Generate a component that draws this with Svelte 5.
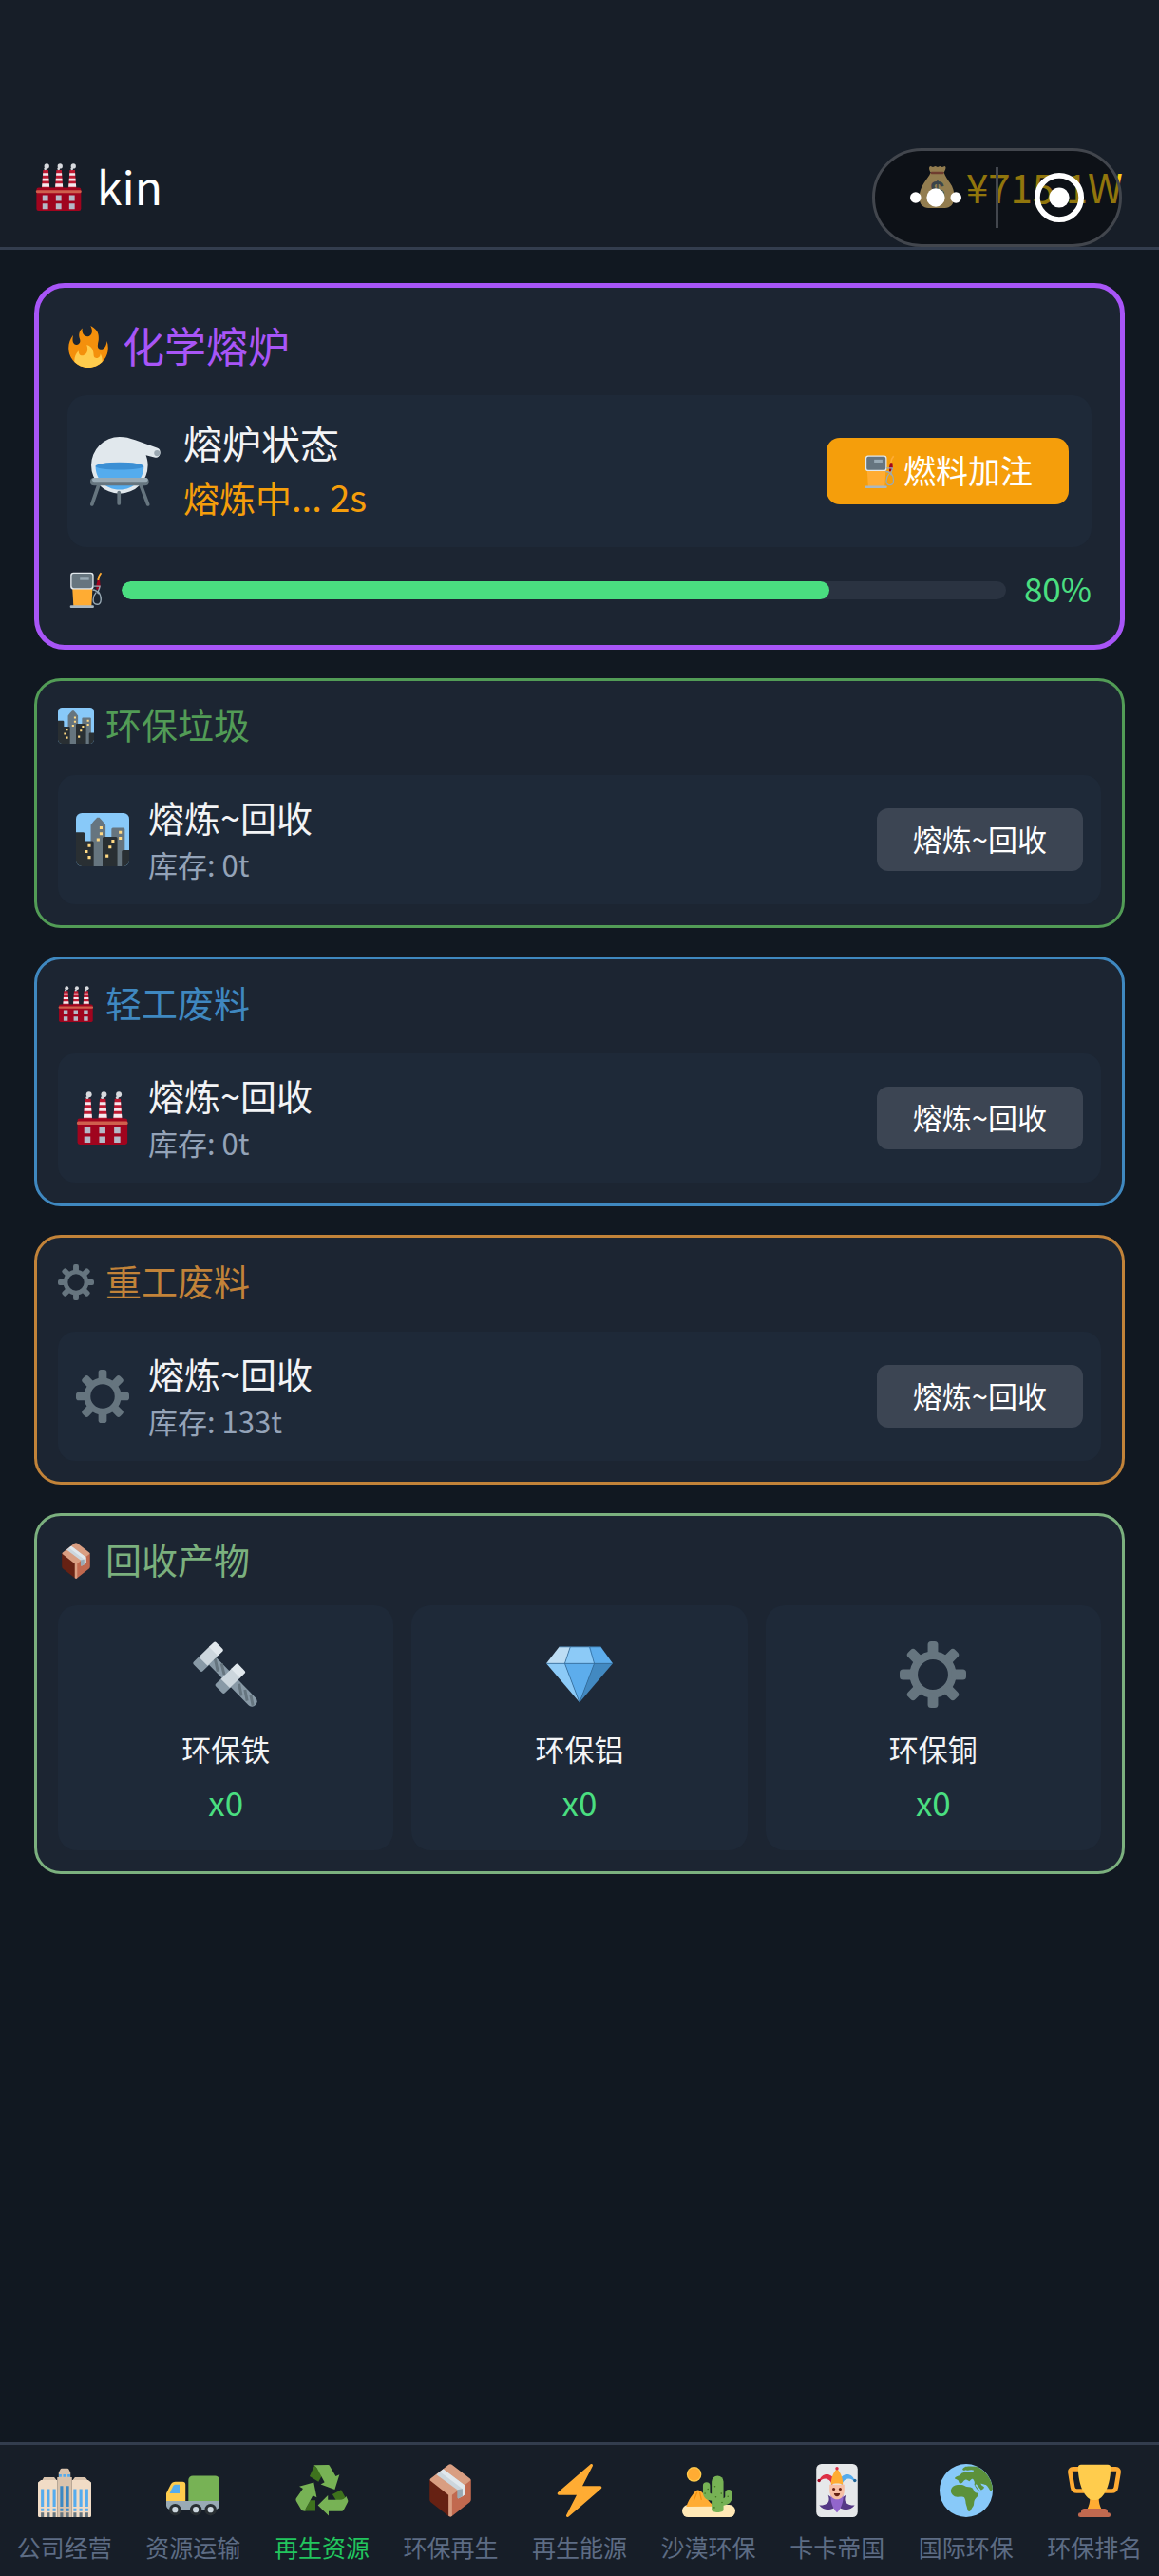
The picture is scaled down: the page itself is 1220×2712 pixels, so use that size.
<script>
  const icons = {
    factory: `
      <path fill="#BE1931" d="M6 5h4l1 15H5zM16.100 5h4l1 15h-6zM26.200 5h4l1 15h-6z"/>
      <path fill="#F5E9EE" d="M5.900 7.300h4.200l.1 1.800H5.800zM16 7.300h4.200l.1 1.800h-4.400zM26.100 7.300h4.200l.1 1.800H26zM5.600 11.400h4.800l.1 1.900h-5zM15.700 11.400h4.800l.1 1.900h-5zM25.800 11.400h4.800l.1 1.900h-5zM5.300 15.300h5.400l.2 2.500H5.100zM15.400 15.300h5.400l.2 2.500h-5.800zM25.500 15.300h5.400l.2 2.500h-5.800z"/>
      <g fill="#D8DADE"><circle cx="8.800" cy="2.100" r="1.900"/><circle cx="7.700" cy="4.200" r="1"/><circle cx="18.900" cy="2.100" r="1.900"/><circle cx="17.800" cy="4.200" r="1"/><circle cx="29" cy="2.100" r="1.900"/><circle cx="27.900" cy="4.200" r="1"/></g>
      <rect x="1" y="18.400" width="33.800" height="17.600" rx="1.600" fill="#A0041E"/>
      <rect x=".6" y="20.300" width="34.500" height="2.200" rx="1" fill="#CF5F4D"/>
      <path fill="#B4B9C7" d="M5.600 24.200h4.200v4.200H5.600zM15.700 24.200h4.200v4.200h-4.200zM25.800 24.200H30v4.200h-4.200zM5.600 30.500h4.200v4.200H5.600zM15.700 30.500h4.200v4.200h-4.200zM25.800 30.500H30v4.200h-4.200z"/>`,
    fire: `
      <path fill="#F4900C" d="M35 19c0-2.062-.367-4.039-1.040-5.868-.46 5.389-3.333 8.157-6.335 6.868-2.812-1.208-.917-5.917-.777-8.164.236-3.809-.012-8.169-6.931-11.794 2.875 5.500.333 8.917-2.333 9.125-2.958.231-5.667-2.542-4.667-7.042-3.238 2.386-3.332 6.402-2.333 9 1.042 2.708-.042 4.958-2.583 5.208-2.840.28-4.418-3.041-2.963-8.333C2.520 10.965 1 14.805 1 19c0 9.389 7.611 17 17 17s17-7.611 17-17z"/>
      <path fill="#FFCC4D" d="M28.394 23.999c.148 3.084-2.561 4.293-4.019 3.709-2.106-.843-1.541-2.291-2.083-5.291s-2.625-5.083-5.708-6c2.250 6.333-1.247 8.667-3.080 9.084-1.872.426-3.753-.001-3.968-4.007C7.352 23.668 6 26.676 6 30c0 .368.023.73.055 1.090C9.125 34.124 13.342 36 18 36s8.875-1.876 11.945-4.910c.032-.36.055-.722.055-1.090 0-2.187-.584-4.236-1.606-6.001z"/>`,
    alembic: `
      <path fill="#E1E8ED" d="M15 .5c3 0 5 .6 8 1.600l11.500 4.100c2.300.9 1.500 5.300-1.200 4.900l-4.800-1.200c.6 1.600 1 3.300 1 5.100A14.500 14.500 0 1 1 15 .5z"/>
      <circle cx="34.200" cy="8.800" r="1.500" fill="#9BA8B2"/>
      <path fill="#55ACEE" d="M2.700 15.400h24.700c0 7-5.500 12.100-12.400 12.100S2.700 22.400 2.700 15.400z"/>
      <ellipse cx="15" cy="15.400" rx="12.300" ry="1.900" fill="#3B8FD4"/>
      <path stroke="#66757F" stroke-width="1.800" stroke-linecap="round" d="M4.500 24.500.9 35M25.600 24.500 29.500 35M14.700 29v5.500"/>
      <rect y="21.400" width="30" height="4" rx="2" fill="#66757F"/>
      <rect x="1" y="21.400" width="28.500" height="2.100" rx="1" fill="#99AAB5"/>`,
    fuel: `
      <path fill="#FFAC33" d="M5 17h20l-1 17H6z"/>
      <rect x="3" y=".6" width="23.200" height="17" rx="3" fill="#E1E8ED"/>
      <rect x="4.300" y="1.900" width="20.600" height="14.400" rx="2" fill="#66757F"/>
      <rect x="12.500" y="5" width="9" height="3.200" fill="#99AAB5"/>
      <rect x="2.600" y="33.300" width="23.800" height="2.700" rx="1" fill="#AAB8C2"/>
      <path fill="none" stroke="#FFAC33" stroke-width="1.700" d="M33.600 1.200c-2 2.300-3 4-3 7.500"/>
      <path fill="#A0041E" d="M30 8.500h2.300l.5 6-1.300 3.200h-2.700v-4.500z"/>
      <path fill="none" stroke="#99AAB5" stroke-width="1.300" d="M25.800 14.300h6.500c-.2 2-1 3-1.700 5.200 3.800 4.500 4 13-1 13-5.600 0-4.500-8-1-12M25 18c3 0 5 1.500 6 4"/>`,
    city: `
      <rect width="36" height="36" rx="4" fill="#88C9F9"/>
      <path fill="#66757F" d="M10 36V8l2-2.500L14.300 3h1.500L18 5.500 20 8v28zM24 36V11a1 1 0 0 1 1-1h7a1 1 0 0 1 1 1v25z"/>
      <path fill="#292F33" d="M0 13h5a1 1 0 0 1 1 1v5h5a1 1 0 0 1 1 1v16H4a4 4 0 0 1-4-4zM18 36V17a1 1 0 0 1 1-1h8a1 1 0 0 1 1 1v19zM31 36V26a1 1 0 0 1 1-1h4v7a4 4 0 0 1-4 4z"/>
      <path fill="#FFD983" d="M16 9h2v2h-2zM16 13h2v2h-2zM14 17h2v2h-2zM29 12h2v2h-2zM29 16h2v2h-2zM24 18h2v2h-2zM22 22h2v2h-2zM20 28h2v2h-2zM8 21h2v2H8zM6 25h2v2H6zM8 29h2v2H8z"/>`,
    gear: `
      <circle cx="18" cy="18" r="10.400" fill="none" stroke="#66757F" stroke-width="4.400"/>
      <g fill="#66757F">${[0, 45, 90, 135, 180, 225, 270, 315]
        .map((a) => `<rect x="15.200" width="5.600" height="8" rx="1.800" transform="rotate(${a} 18 18)"/>`)
        .join("")}</g>`,
    box: `
      <path fill="#662113" d="M4 10.500 18 21v14.800c-.6 0-1-.3-1.500-.7L5 26c-.7-.6-1-1.200-1-2z"/>
      <path fill="#C1694F" d="M32 10.500 18 21v14.800c.6 0 1-.3 1.500-.7L31 26c.7-.6 1-1.200 1-2z"/>
      <path fill="#D99E82" d="M5 9.700 16.500.8c1-.8 2-.8 3 0L31 9.700c1 .8 1 1.300 0 2.100L19.200 21v14.200c-.7.700-1.700.700-2.400 0V21L5 11.800c-1-.8-1-1.300 0-2.100z"/>
      <path fill="#CCD6DD" d="M8.600 7.200 13.300 3.500 28 14.700v5.800l-1.500 1.300-3.300 1.700v-5.600z"/>
      <path fill="#E1E8ED" d="M11 5.300l2.300-1.800L28 14.700v5.800l-1.700 1.200v-4.900z"/>
      <path fill="#99AAB5" d="M22.700 17.500l3.600-.7v4.900l-2.300 1.500c-.8.300-1.300 0-1.300-.7z"/>`,
    bolt: `
      <path d="M9 9 32 32.500" stroke="#8899A6" stroke-width="5.600" stroke-linecap="round"/>
      <path d="M12 9.300l1.500 7M15.500 12l1.500 6M25 23l1.300 6.500M28.200 26.200l1.200 6M31.300 29l1.200 5.800" stroke="#66757F" stroke-width="1.500"/>
      <path fill="#8899A6" d="M4 7.600.5 11.100c-.5.500-.5 1 0 1.500l3.400 3.500c.5.500 1 .5 1.500 0L9 12.600zM16 19.500l-3.500 3.400c-.5.500-.5 1 0 1.500l3.400 3.500c.5.500 1 .5 1.500 0l3.600-3.500z"/>
      <path fill="#CCD6DD" d="M9 2.800 3.200 8.500 8 13.300l5.700-5.700zM21 14.700l-5.800 5.700 4.800 4.800 5.800-5.700z"/>
      <path fill="#E1E8ED" d="M8.700 3 11.200.6c.5-.5 1-.5 1.500 0L16 4c.5.500.5 1 0 1.500l-2.500 2.400zM20.700 14.900l2.500-2.400c.5-.5 1-.5 1.500 0l3.300 3.400c.5.500.5 1 0 1.500l-2.500 2.400z"/>`,
    gem: `
      <path fill="#8CCAF7" d="M13 3h10.500L26 12H10z"/>
      <path fill="#BDDDF4" d="M7 3h6l-3 9H0z"/>
      <path fill="#5DADEC" d="M23 3h6.500L36 12H26z"/>
      <path fill="#8CCAF7" d="M0 12h10l8 21z"/>
      <path fill="#5DADEC" d="M10 12h16l-8 21z"/>
      <path fill="#4289C1" d="M26 12h10L18 33z"/>
      <path fill="none" stroke="#356f9e" stroke-width=".4" d="M7 3h22.500M0 12h36M13 3l-3 9 8 21 8-21-2.500-9"/>`,
    office: `
      <path fill="#D9C3AD" d="M2.500 11.500 4 9h7l2 2.500zM23 11.500 25 9h7l2 2.500zM14 9V6l1.200-2.500c.2-.3.5-.5.8-.5h4c.3 0 .6.200.8.500L22 6v3z"/>
      <path fill="#F1DCC6" d="M0 12.500 2 11h11v25H1a1 1 0 0 1-1-1zM36 12.500 34 11H23v25h12a1 1 0 0 0 1-1z"/>
      <path fill="#D9C3AD" d="M13 9h10v27H13z"/>
      <path fill="#55ACEE" d="M14.200 7h1.800v1.800h-1.800zM17 7h2v1.800h-2zM20 7h1.800v1.800H20zM2 17h2v12H2zM6 17h2v12H6zM10 17h2v12h-2zM24 17h2v12h-2zM28 17h2v12h-2zM32 17h2v12h-2zM2 30h2v2H2zM6 30h2v2H6zM10 30h2v2h-2zM24 30h2v2h-2zM28 30h2v2h-2zM32 30h2v2h-2z"/>
      <path fill="#3B88C3" d="M15 15h2v14h-2zM19 15h2v14h-2zM15 30h2v2h-2zM19 30h2v2h-2z"/>
      <path fill="#66757F" d="M2 33h2v3H2zM6 33h2v3H6zM10 33h2v3h-2zM15 33h2v3h-2zM19 33h2v3h-2zM24 33h2v3h-2zM28 33h2v3h-2zM32 33h2v3h-2z"/>`,
    truck: `
      <path fill="#99AAB5" d="M0 25h36v3a3 3 0 0 1-3 3H3a3 3 0 0 1-3-3z"/>
      <path fill="#77B255" d="M15 11a3 3 0 0 1 3-3h15a3 3 0 0 1 3 3v14H15z"/>
      <path fill="#FFCC4D" d="M0 25v-5l3-6c.7-1.400 1.700-2 3.200-2H11a2 2 0 0 1 2 2v11z"/>
      <path fill="#55ACEE" d="M9 14H6.500c-1 0-1.500.3-2 1.200L2.300 20H9z"/>
      <g fill="#292F33"><circle cx="6" cy="31" r="4"/><circle cx="20" cy="31" r="4"/><circle cx="30" cy="31" r="4"/></g>
      <g fill="#CCD6DD"><circle cx="6" cy="31" r="2"/><circle cx="20" cy="31" r="2"/><circle cx="30" cy="31" r="2"/></g>`,
    recycle: `
      <path fill="#3E721D" d="M12.900 1 9.600 8.400l6 3.600 2.500-4.500zM13.500 24.600H10L6.200 31.800h7.300zM30.900 17.500 25 20.600l2.500 4 7-.6z"/>
      <path fill="#77B255" d="M12.400.8 21.700.7c.8 0 1.300.3 1.700 1l3.900 6.700 2.500-1.100-3.200 10.100-9.500-3.500 2.600-1.600L15.200 4c-.7-1.300-1.500-2.500-2.800-3.200z"/>
      <path fill="#77B255" d="M2.600 15.200l9.800-2.600 2 10.100-2.600-1.300-4.500 8.100c-.5 1-.8 1.800-.6 2.500-1.500 0-2.300-.2-3-1.400L.6 25.200c-.4-.7-.4-1.300 0-2l4.500-6.500z"/>
      <path fill="#77B255" d="M15.200 28 22 21.200v3h7.500c2.300 0 4-.5 4.800-2.400l1.100 2.400c.3.700.2 1.200-.1 1.800l-2.600 5c-.4.700-.9 1-1.700 1h-8.500v3z"/>`,
    zap: `
      <path fill="#FFAC33" d="M32.938 15.651C32.792 15.260 32.418 15 32 15H19.925L26.890 1.458c.219-.426.106-.947-.271-1.243C26.437.071 26.218 0 26 0c-.233 0-.466.082-.653.243L18 6.588 3.347 19.243c-.316.273-.43.714-.284 1.105S3.582 21 4 21h12.075L9.110 34.542c-.219.426-.106.947.271 1.243.182.144.401.215.619.215.233 0 .466-.082.653-.243L18 29.412l14.653-12.655c.317-.273.43-.714.285-1.106z"/>`,
    desert: `
      <circle cx="8.100" cy="7" r="5" fill="#FFCC4D"/><circle cx="8.100" cy="7" r="4.200" fill="#FFAC33"/>
      <rect y="27.700" width="36" height="8.300" rx="4.100" fill="#FFE8B6"/>
      <path fill="#FFAC33" d="M2.800 29c1-3.500 2.500-6 4.500-8.500 1.500-2 2.500-3 4-2.700 3.500 1 5 6 9 9.500v1.500z"/>
      <path d="M10 19.500l-2 5M12 19.500l1 4.500" stroke="#F4900C" stroke-width=".8" stroke-linecap="round"/>
      <path fill="#77B255" d="M20 12a4 4 0 0 1 8 0v19c0 2.300-8 2.300-8 0z"/>
      <path fill="none" stroke="#77B255" stroke-width="4.800" stroke-linecap="round" d="M16.500 14.700v4.500c0 2.800 2 3.500 5.500 3.500M31.500 19.700v2.500c0 2.600-2 3.500-5.500 3.700"/>
      <g fill="#3E721D"><circle cx="22.200" cy="15.300" r=".5"/><circle cx="26.500" cy="20" r=".5"/><circle cx="22.800" cy="22.300" r=".5"/><circle cx="27" cy="26" r=".5"/><circle cx="21.800" cy="29.500" r=".5"/><circle cx="17.500" cy="17" r=".5"/><circle cx="15.500" cy="20" r=".5"/><circle cx="31" cy="22" r=".5"/></g>`,
    joker: `
      <rect x="4" width="28" height="36" rx="3.500" fill="#E6E8EA"/>
      <path fill="#DD2E44" d="M14.500 15c0-3-1.700-4.500-4.200-5-2 0-3.300 1-4.500 2.300C6.500 8 10 6.500 12.500 7.300c2 .7 3 2 3.500 4z"/>
      <path fill="#55ACEE" d="M21.500 15c0-3 1.700-4.500 4.200-5 2 0 3.300 1 4.500 2.300C29.500 8 26 6.500 23.500 7.300c-2 .7-3 2-3.500 4z"/>
      <circle cx="5.900" cy="11.300" r="1.100" fill="#A0041E"/><circle cx="30.100" cy="11.300" r="1.100" fill="#226699"/>
      <path fill="#553986" d="M12 21c2 1 3 3 6 3s4-2 6-3c-1.500 4-.5 7 6 7-3 4-9 4-12 0-3 4-9 4-12 0 6.500 0 7.500-3 6-7z"/>
      <path fill="#9266CC" d="M14 20h8c1 5-1.500 11-4 13-2.500-2-5-8-4-13z"/>
      <path fill="#F7BFA5" d="M13 14h10v4c0 3.800-2.500 6-5 6s-5-2.200-5-6z"/>
      <path fill="#FFAC33" d="M14 14c0-5 1.500-8 4-11 2.500 3 4 6 4 11-2-1.200-6-1.200-8 0z"/>
      <circle cx="18" cy="3" r="1.100" fill="#DD2E44"/>
      <g fill="#662113"><circle cx="15.800" cy="17" r="1"/><circle cx="20.200" cy="17" r="1"/><path d="M16 20h4c0 1.300-.8 2-2 2s-2-.7-2-2z"/></g>`,
    globe: `
      <circle cx="18" cy="18" r="18" fill="#88C9F9"/>
      <path fill="#5C913B" d="M7.700 17.500c.6-2 2.300-3.200 4.500-3.300 2-.2 4-.2 5 .8 1 1 3.500.3 4.900 1.200 1 .8 1 2.600 2.300 3.300 1 .5 2 0 2 .9 0 1.600-2.200 2.600-2.800 4.400-.7 2 .2 3-1.500 4.800-.8 1-.8 2.500-2 2.500-1.400 0-1.200-2.300-2-4.200-.7-1.600-.2-3.200-1.200-4.900-.8-1.200-3-.6-5-.7-2.400 0-4.700-2.500-4.200-4.800z"/>
      <path fill="#5C913B" d="M15.500 3.500c1-1.500 3-2.200 5-1.900l4.500.2A18 18 0 0 1 35.900 17c-.6 1.400-1.200.8-1.500 1.100-.7-1-1.500-2.700-3-4-1.400-.3-2.200-.6-3.500-1 .3 1.700 1.500 1.600 2.300 2.500-.3 1.800-1.600 2.700-3 3.200-1.700-1-2.700-3-3.700-4.800.5-1.700 0-2.500-.8-3.700-.9-.7-1.800.8-2.500 1.500-1-.5-1.600-1.500-2.900-1-1.600.6-1.300 2.400-3.300 2.300-1.300-.3-.7-2-2-2.400-1.400-.7-1.700-.3-1.700-1.200 1.200-1.500 3-1.200 4-2.500.7-1.200 2.300-1.200 3.800-1.500-.2-1.400-2.500-.8-2.600-2z"/>
      <path d="M17 4.500c2 1 4-.5 6 .3M24.500 14l3.500 4.500 3-1.800" fill="none" stroke="#88C9F9" stroke-width="1.100"/>`,
    trophy: `
      <g fill="none" stroke="#FFAC33" stroke-width="3"><path d="M8.500 3.500H3.500c-1.500 0-2.100.8-1.900 2.300l1.700 10c.3 1.800 1.300 2.500 2.800 2.500H11"/><path d="M27.500 3.500h5c1.500 0 2.100.8 1.900 2.300l-1.700 10c-.3 1.800-1.300 2.500-2.800 2.500H25"/></g>
      <path fill="#FFAC33" d="M15 23h6c0 3 .5 5 2 8H13c1.500-3 2-5 2-8z"/>
      <path fill="#FFCC4D" d="M7 2.500A2 2 0 0 1 9 .5h18a2 2 0 0 1 2 2C29 13 25 24.500 18 24.500S7 13 7 2.500z"/>
      <path fill="#C1694F" d="M9 32.500a2.300 2.300 0 0 1 2.300-2.300h13.400a2.300 2.300 0 0 1 2.300 2.300v.5h.5a1.500 1.500 0 0 1 0 3h-19a1.500 1.500 0 0 1 0-3H9z"/>`,
    bag: `
      <path fill="#FDD888" d="M13 5h11c1.500 4 3 6 5.500 9.500S33.300 22 33 27c-.3 6-3.300 8.900-8 8.900H11c-4.700 0-8-2.900-8-8.900 0-5 1.500-8.500 4-12.500S11.500 9 13 5zM12.500 0c1 0 1.500.8 2.200.8S16 0 16.800 0s1.400.8 2 .8S20 0 20.800 0s1.300.8 2 .8S24.300 0 25 0c1.500 1 .5 3-.5 5h-12c-1-2-1.600-4 0-5z"/>
      <rect x="12.800" y="4.800" width="11.400" height="2" rx="1" fill="#BF6952"/>
      <text x="18.500" y="29" text-anchor="middle" font-family="Liberation Sans, sans-serif" font-size="22" font-weight="700" fill="#67757F">$</text>`,
  };

  const wastes = [
    { title: "环保垃圾", icon: "city", stock: 0, tone: "green" },
    { title: "轻工废料", icon: "factory", stock: 0, tone: "blue" },
    { title: "重工废料", icon: "gear", stock: 133, tone: "orange" },
  ];

  const products = [
    { name: "环保铁", icon: "bolt", count: 0 },
    { name: "环保铝", icon: "gem", count: 0 },
    { name: "环保铜", icon: "gear", count: 0 },
  ];

  const tabs = [
    { label: "公司经营", icon: "office" },
    { label: "资源运输", icon: "truck" },
    { label: "再生资源", icon: "recycle" },
    { label: "环保再生", icon: "box" },
    { label: "再生能源", icon: "zap" },
    { label: "沙漠环保", icon: "desert" },
    { label: "卡卡帝国", icon: "joker" },
    { label: "国际环保", icon: "globe" },
    { label: "环保排名", icon: "trophy" },
  ];

  let active = $state("再生资源");
  let fuel = $state(80);

  function refuel() {
    fuel = Math.min(100, fuel + 10);
  }
</script>

{#snippet icon(name)}
  <svg class="icon" viewBox="0 0 36 36" fill="none" aria-hidden="true">{@html icons[name]}</svg>
{/snippet}

<div class="page">
  <header>
    <div class="player">{@render icon("factory")}<span>kin</span></div>
    <div class="money">{@render icon("bag")}<span>¥715.1W</span></div>
    <div class="capsule">
      <button type="button" aria-label="更多">
        <svg viewBox="0 0 56 56" fill="#fff"><circle cx="6" cy="28" r="6" /><circle cx="28" cy="28" r="10" /><circle cx="50" cy="28" r="6" /></svg>
      </button>
      <i></i>
      <button type="button" aria-label="关闭">
        <svg viewBox="0 0 56 56" fill="#fff"><circle cx="28" cy="28" r="24" fill="none" stroke="#fff" stroke-width="6" /><circle cx="28" cy="28" r="11" /></svg>
      </button>
    </div>
  </header>

  <main>
    <section class="furnace">
      <h1>{@render icon("fire")}<span>化学熔炉</span></h1>
      <div class="status">
        {@render icon("alembic")}
        <div class="info">
          <p>熔炉状态</p>
          <p class="state">熔炼中... 2s</p>
        </div>
        <button type="button" class="refuel" onclick={refuel}>{@render icon("fuel")}<span>燃料加注</span></button>
      </div>
      <div class="fuel">
        {@render icon("fuel")}
        <div class="track" role="progressbar" aria-label="燃料" aria-valuenow={fuel} aria-valuemin="0" aria-valuemax="100">
          <div class="fill" style="width: {fuel}%"></div>
        </div>
        <span>{fuel}%</span>
      </div>
    </section>

    {#each wastes as w}
      <section class="card {w.tone}">
        <h2>{@render icon(w.icon)}<span>{w.title}</span></h2>
        <div class="row">
          {@render icon(w.icon)}
          <div class="info">
            <p>熔炼~回收</p>
            <p class="stock">库存: {w.stock}t</p>
          </div>
          <button type="button" class="smelt">熔炼~回收</button>
        </div>
      </section>
    {/each}

    <section class="card products">
      <h2>{@render icon("box")}<span>回收产物</span></h2>
      <ul>
        {#each products as p}
          <li>
            {@render icon(p.icon)}
            <span>{p.name}</span>
            <b>x{p.count}</b>
          </li>
        {/each}
      </ul>
    </section>
  </main>

  <nav>
    {#each tabs as tab}
      <button type="button" class:active={active === tab.label} onclick={() => (active = tab.label)}>
        {@render icon(tab.icon)}
        {tab.label}
      </button>
    {/each}
  </nav>
</div>

<style>
  :global(body) {
    margin: 0;
    background: #111821;
  }
  .page {
    min-height: 100vh;
    display: flex;
    flex-direction: column;
    color: #f3f4f6;
    font-family: "Noto Sans CJK SC", "Noto Sans", sans-serif;
  }
  h1,
  h2,
  p,
  ul {
    margin: 0;
    padding: 0;
    font-weight: 400;
  }
  button {
    font: inherit;
    color: inherit;
    background: none;
    border: 0;
    padding: 0;
    cursor: pointer;
  }
  .icon {
    display: block;
    flex-shrink: 0;
  }
  /* the CJK face sits low in its line box, lift it next to icons */
  header span,
  h1 span,
  h2 span,
  .refuel span,
  .fuel span,
  .info {
    padding-bottom: 4px;
  }

  header {
    position: relative;
    display: flex;
    align-items: center;
    justify-content: space-between;
    padding: 134px 38px 0 36px;
    background: #171e28;
    border-bottom: 3px solid #333d4e;
  }
  .player,
  .money {
    display: flex;
    align-items: center;
    height: 126px;
  }
  .player {
    gap: 14px;
    font-size: 48px;
    color: #fff;
  }
  .player .icon {
    width: 52px;
    height: 50px;
  }
  .money {
    gap: 9px;
    font-size: 42px;
    color: #facc15;
  }
  .money .icon {
    width: 44px;
    height: 44px;
  }
  .capsule {
    position: absolute;
    top: 156px;
    right: 39px;
    box-sizing: border-box;
    width: 263px;
    height: 104px;
    display: flex;
    align-items: center;
    border: 3px solid #42464d;
    border-radius: 52px;
    background: rgba(0, 0, 0, 0.42);
  }
  .capsule i {
    width: 3px;
    height: 64px;
    background: #42464d;
  }
  .capsule button {
    flex: 1;
    display: flex;
    justify-content: center;
  }
  .capsule svg {
    width: 54px;
    height: 54px;
  }

  main {
    flex: 1;
    display: flex;
    flex-direction: column;
    gap: 30px;
    padding: 35px 36px;
  }
  .furnace {
    padding: 30px;
    border: 5px solid #a855f7;
    border-radius: 32px;
    background: #1c2532;
  }
  h1 {
    display: flex;
    align-items: center;
    gap: 14px;
    margin-bottom: 19px;
    font-size: 44px;
    line-height: 60px;
    color: #a855f7;
  }
  h1 .icon {
    width: 44px;
    height: 44px;
  }
  .status {
    display: flex;
    align-items: center;
    gap: 24px;
    box-sizing: border-box;
    min-height: 160px;
    padding: 0 24px;
    border-radius: 20px;
    background: #1e2938;
  }
  .status > .icon {
    width: 74px;
    height: 74px;
  }
  .info {
    flex: 1;
  }
  .status p {
    font-size: 41px;
    line-height: 58px;
  }
  .status .state {
    font-size: 38px;
    color: #f59e0b;
  }
  .refuel {
    display: flex;
    align-items: center;
    gap: 8px;
    height: 70px;
    padding: 0 38px;
    border-radius: 14px;
    background: #f59e0b;
    color: #fff;
    font-size: 34px;
  }
  .refuel .icon {
    width: 35px;
    height: 35px;
  }
  .fuel {
    display: flex;
    align-items: center;
    gap: 19px;
    margin-top: 17px;
    font-size: 35px;
    line-height: 52px;
    color: #4ade80;
  }
  .fuel .icon {
    width: 38px;
    height: 38px;
  }
  .track {
    flex: 1;
    height: 19px;
    border-radius: 10px;
    background: #2a3341;
    overflow: hidden;
  }
  .fill {
    height: 100%;
    border-radius: 10px;
    background: #4ade80;
  }

  .card {
    padding: 22px;
    border: 3px solid var(--tone);
    border-radius: 28px;
    background: #1c2532;
  }
  .green {
    --tone: #529c56;
  }
  .blue {
    --tone: #3f88c0;
  }
  .orange {
    --tone: #c28339;
  }
  .products {
    --tone: #7bb07e;
  }
  h2 {
    display: flex;
    align-items: center;
    gap: 12px;
    margin-bottom: 27px;
    font-size: 38px;
    line-height: 46px;
    color: var(--tone);
  }
  h2 .icon {
    width: 38px;
    height: 38px;
  }
  .row {
    display: flex;
    align-items: center;
    gap: 20px;
    box-sizing: border-box;
    min-height: 136px;
    padding: 0 19px;
    border-radius: 18px;
    background: #1e2938;
  }
  .row .icon {
    width: 56px;
    height: 56px;
  }
  .row p {
    font-size: 38px;
    line-height: 56px;
  }
  .row .stock {
    font-size: 31px;
    line-height: 44px;
    color: #94a3b8;
  }
  .smelt {
    height: 66px;
    padding: 0 38px 4px;
    border-radius: 12px;
    background: #3c4553;
    color: #fff;
    font-size: 31px;
  }

  .products h2 {
    margin-bottom: 22px;
  }
  ul {
    display: grid;
    grid-template-columns: repeat(3, 1fr);
    gap: 19px;
    list-style: none;
  }
  li {
    display: flex;
    flex-direction: column;
    align-items: center;
    padding: 38px 0 21px;
    border-radius: 20px;
    background: #1e2938;
  }
  li .icon {
    width: 70px;
    height: 70px;
    margin-bottom: 18px;
  }
  li span {
    font-size: 31px;
    line-height: 50px;
  }
  li b {
    font-size: 35px;
    font-weight: 400;
    line-height: 61px;
    color: #4ade80;
  }

  nav {
    position: sticky;
    bottom: 0;
    display: flex;
    padding: 20px 0 12px;
    background: #171e28;
    border-top: 3px solid #333d4e;
  }
  nav button {
    flex: 1;
    display: flex;
    flex-direction: column;
    align-items: center;
    gap: 12px;
    font-size: 25px;
    line-height: 38px;
    color: #5d6c84;
  }
  nav .active {
    color: #22c55e;
  }
  nav .icon {
    width: 56px;
    height: 56px;
  }
</style>
